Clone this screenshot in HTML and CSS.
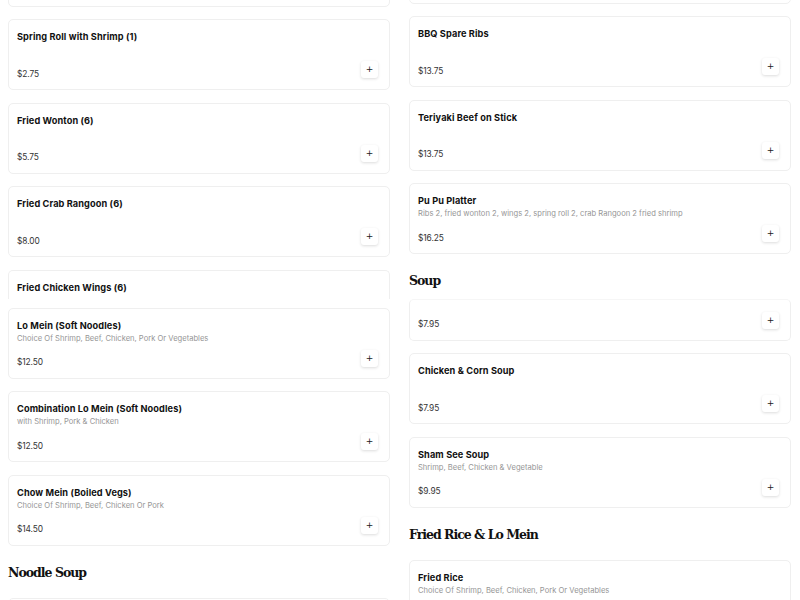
FILE: index.html
```html
<!DOCTYPE html>
<html>
<head>
<meta charset="utf-8">
<link rel="stylesheet" href="styles.css">
</head>
<body>
<div class="menu">
  <div class="column">
    <div class="card card--top-left"></div>
    <div class="card"><div class="title">Spring Roll with Shrimp (1)</div><div class="foot"><span class="price">$2.75</span><button class="add">+</button></div></div>
    <div class="card"><div class="title">Fried Wonton (6)</div><div class="foot"><span class="price">$5.75</span><button class="add">+</button></div></div>
    <div class="card"><div class="title">Fried Crab Rangoon (6)</div><div class="foot"><span class="price">$8.00</span><button class="add">+</button></div></div>
    <div class="card card--short"><div class="title">Fried Chicken Wings (6)</div></div>
    <div class="card"><div class="title">Lo Mein (Soft Noodles)</div><div class="desc">Choice Of Shrimp, Beef, Chicken, Pork Or Vegetables</div><div class="foot"><span class="price">$12.50</span><button class="add">+</button></div></div>
    <div class="card"><div class="title">Combination Lo Mein (Soft Noodles)</div><div class="desc">with Shrimp, Pork &amp; Chicken</div><div class="foot"><span class="price">$12.50</span><button class="add">+</button></div></div>
    <div class="card"><div class="title">Chow Mein (Boiled Vegs)</div><div class="desc">Choice Of Shrimp, Beef, Chicken Or Pork</div><div class="foot"><span class="price">$14.50</span><button class="add">+</button></div></div>
    <h2 class="section">Noodle Soup</h2>
    <div class="card"></div>
  </div>
  <div class="column">
    <div class="card card--top-right"></div>
    <div class="card"><div class="title">BBQ Spare Ribs</div><div class="foot"><span class="price">$13.75</span><button class="add">+</button></div></div>
    <div class="card"><div class="title">Teriyaki Beef on Stick</div><div class="foot"><span class="price">$13.75</span><button class="add">+</button></div></div>
    <div class="card"><div class="title">Pu Pu Platter</div><div class="desc">Ribs 2, fried wonton 2, wings 2, spring roll 2, crab Rangoon 2 fried shrimp</div><div class="foot"><span class="price">$16.25</span><button class="add">+</button></div></div>
    <h2 class="section">Soup</h2>
    <div class="card card--cut"><div class="foot"><span class="price">$7.95</span><button class="add">+</button></div></div>
    <div class="card"><div class="title">Chicken &amp; Corn Soup</div><div class="foot"><span class="price">$7.95</span><button class="add">+</button></div></div>
    <div class="card"><div class="title">Sham See Soup</div><div class="desc">Shrimp, Beef, Chicken &amp; Vegetable</div><div class="foot"><span class="price">$9.95</span><button class="add">+</button></div></div>
    <h2 class="section">Fried Rice &amp; Lo Mein</h2>
    <div class="card"><div class="title">Fried Rice</div><div class="desc">Choice Of Shrimp, Beef, Chicken, Pork Or Vegetables</div><div class="foot"><span class="price">$12.50</span><button class="add">+</button></div></div>
  </div>
</div>
</body>
</html>
```

FILE: styles.css
```css
html, body {
  margin: 0;
  padding: 0;
  background: #fff;
  overflow: hidden;
}
body {
  font-family: Inter, "DejaVu Sans", sans-serif;
  color: #1a1a1a;
}
.menu {
  display: grid;
  grid-template-columns: 382px 382px;
  column-gap: 19px;
  padding: 0 9px 0 8px;
  height: 600px;
  overflow: hidden;
  align-items: start;
}
.column {
  display: flex;
  flex-direction: column;
  gap: 12.5px;
}
.card {
  box-sizing: border-box;
  height: 71px;
  border: 1px solid #efefef;
  border-radius: 5px;
  padding: 10px 11px 8px 8px;
  display: flex;
  flex-direction: column;
  background: #fff;
  flex-shrink: 0;
}
.card--top-left { margin-top: -64.5px; }
.card--top-right { margin-top: -67.5px; }
.card--short {
  height: 29px;
  border-bottom: none;
  border-radius: 5px 5px 0 0;
  margin-bottom: -3.5px;
}
.card--cut {
  height: 42px;
  margin-top: -7.5px;
  border-top-color: #f6f6f6;
}
.title {
  font-size: 9.2px;
  font-weight: 650;
  line-height: 14px;
  color: #111;
  letter-spacing: 0.1px;
}
.desc {
  font-size: 7.6px;
  line-height: 12px;
  color: #969696;
}
.foot {
  margin-top: auto;
  display: flex;
  align-items: center;
  justify-content: space-between;
  height: 18px;
}
.price {
  font-size: 8.4px;
  color: #333;
  letter-spacing: -0.1px;
  position: relative;
  top: 1.5px;
}
.add {
  width: 17px;
  height: 17px;
  padding: 0;
  border: none;
  border-radius: 3px;
  background: #fff;
  box-shadow: 0 1px 3px rgba(0, 0, 0, 0.14);
  font-family: "DejaVu Sans", sans-serif;
  font-size: 9px;
  line-height: 17px;
  color: #222;
  position: relative;
  top: -2.5px;
}
.section {
  margin: 0;
  padding: 4.5px 0 2.5px;
  font-family: "DejaVu Serif", serif;
  font-weight: 700;
  font-size: 12.5px;
  line-height: 20px;
  color: #111;
  letter-spacing: -1px;
}
```
